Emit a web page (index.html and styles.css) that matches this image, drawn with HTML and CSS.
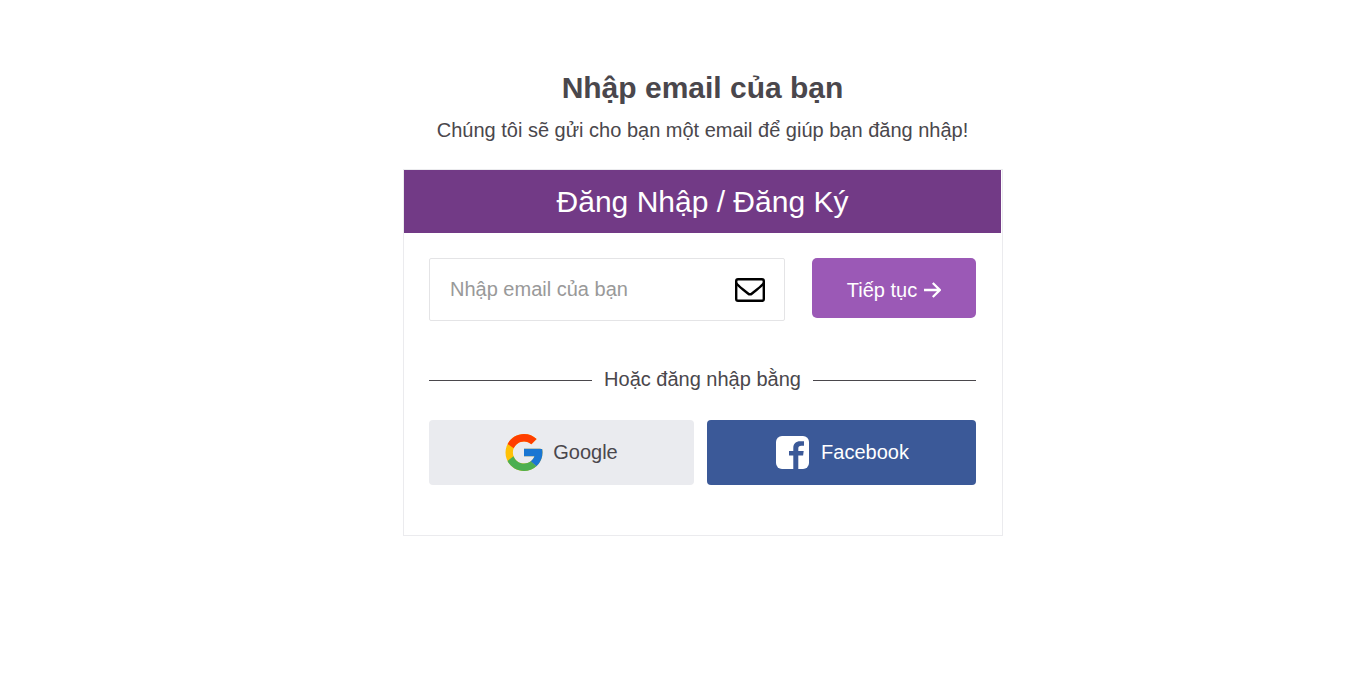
FILE: index.html
```html
<!DOCTYPE html>
<html lang="vi">
    <head>
        <meta charset="UTF-8">
        <title>Đăng Nhập / Đăng Ký</title>
        <link rel="stylesheet" href="styles.css">
    </head>

    <body>
        <main class="login">
            <h1>Nhập email của bạn</h1>
            <p class="intro">Chúng tôi sẽ gửi cho bạn một email để giúp bạn đăng nhập!</p>

            <div class="card">
                <h2 class="card-title">Đăng Nhập / Đăng Ký</h2>

                <form class="email-form">
                    <div class="email-field">
                        <input type="email" placeholder="Nhập email của bạn">
                        <svg class="mail-icon" viewBox="0 0 30 24">
                            <rect x="1.200" y="1.200" width="27.600" height="21.600" rx="1.800"/>
                            <path d="M1.200 5C2.500 7.500 7 10.500 13 15.500Q15 17.200 17 15.500C23 10.500 27.500 7.500 28.800 5"/>
                        </svg>
                    </div>
                    <button class="continue" type="submit">
                        Tiếp tục
                        <svg class="arrow-icon" viewBox="0 0 17 16">
                            <path d="M0 8H15.500M8.800 1L15.800 8L8.800 15"/>
                        </svg>
                    </button>
                </form>

                <div class="divider">Hoặc đăng nhập bằng</div>

                <div class="social">
                    <button class="google">
                        <svg class="google-icon" viewBox="4 4 40 40">
                            <path fill="#ffc107" d="M43.611 20.083H42V20H24v8h11.303c-1.649 4.657-6.080 8-11.303 8-6.627 0-12-5.373-12-12s5.373-12 12-12c3.059 0 5.842 1.154 7.961 3.039l5.657-5.657C34.046 6.053 29.268 4 24 4 12.955 4 4 12.955 4 24s8.955 20 20 20 20-8.955 20-20c0-1.341-.138-2.650-.389-3.917z"/>
                            <path fill="#ff3d00" d="M6.306 14.691l6.571 4.819C14.655 15.108 18.961 12 24 12c3.059 0 5.842 1.154 7.961 3.039l5.657-5.657C34.046 6.053 29.268 4 24 4 16.318 4 9.656 8.337 6.306 14.691z"/>
                            <path fill="#4caf50" d="M24 44c5.166 0 9.860-1.977 13.409-5.192l-6.190-5.238C29.211 35.091 26.715 36 24 36c-5.202 0-9.619-3.317-11.283-7.946l-6.522 5.025C9.505 39.556 16.227 44 24 44z"/>
                            <path fill="#1976d2" d="M43.611 20.083H42V20H24v8h11.303c-.792 2.237-2.231 4.166-4.087 5.571l6.193 5.238C36.971 39.205 44 34 44 24c0-1.341-.138-2.650-.389-3.917z"/>
                        </svg>
                        Google
                    </button>
                    <button class="facebook">
                        <svg class="facebook-icon" viewBox="0 0 33 33">
                            <rect width="33" height="33" rx="6" fill="#fff"/>
                            <path fill="#3b5998" d="M17.300 33V19.600H13V15H17.300V12C17.300 7.500 20 5.200 24.100 5.200H28V9.800H25.300C23.200 9.800 22.300 10.800 22.300 12.600V15H27.700L27.100 19.600H22.300V33Z"/>
                        </svg>
                        Facebook
                    </button>
                </div>
            </div>
        </main>
    </body>
</html>
```
FILE: styles.css
```css
*, *::after, *::before {
    box-sizing: border-box;
}

body {
    margin: 0;
    background-color: white;
    color: #4a474c;
    font-family: "Liberation Sans", Arial, sans-serif;
    font-size: 20px;
}

h1, h2, p {
    margin: 0;
    text-align: center;
}

button {
    display: flex;
    justify-content: center;
    align-items: center;
    padding: 0;
    border: none;
    font: inherit;
    cursor: pointer;
}

input {
    font: inherit;
}

.login {
    width: 600px;
    margin-left: 403px;
    padding-top: 68px;
}

h1 {
    padding-right: 1px;
    font-size: 30px;
    line-height: 40px;
}

.intro {
    margin-top: 7px;
    padding-right: 1px;
    line-height: 30px;
}

.card {
    height: 367px;
    margin-top: 24px;
    border: 1px solid #ebebee;
}

.card-title {
    height: 63px;
    margin-right: 1px;
    background-color: #723a86;
    color: white;
    font-size: 30px;
    font-weight: normal;
    line-height: 63px;
}

.email-form {
    display: flex;
    justify-content: space-between;
    align-items: flex-start;
    padding: 25px 26px 0 25px;
}

.email-field {
    display: flex;
    align-items: center;
    width: 356px;
    height: 63px;
    padding: 0 19px 0 20px;
    border: 1px solid #e4e4e6;
    border-radius: 2px;
}

.email-field input {
    flex: 1;
    min-width: 0;
    padding: 0;
    border: none;
    outline: none;
}

.email-field input::placeholder {
    color: #999;
}

.mail-icon {
    width: 30px;
    height: 24px;
    fill: none;
    stroke: black;
    stroke-width: 2.4;
}

.continue {
    gap: 7px;
    width: 164px;
    height: 60px;
    padding: 4px 0 0;
    border-radius: 5px;
    background-color: #9b59b6;
    color: white;
}

.arrow-icon {
    width: 17px;
    height: 16px;
    fill: none;
    stroke: white;
    stroke-width: 2.3;
}

.divider {
    display: flex;
    align-items: center;
    gap: 12px;
    margin: 43px 26px 0 25px;
    line-height: 30px;
}

/* lines on both sides of the text */
.divider::before,
.divider::after {
    content: '';
    flex: 1;
    height: 1px;
    margin-top: 2px;
    background-color: #4a474c;
}

.social {
    display: flex;
    gap: 13px;
    margin: 26px 26px 0 25px;
}

.google,
.facebook {
    height: 65px;
    border-radius: 4px;
}

.google {
    gap: 10px;
    width: 265px;
    background-color: #eaebef;
    color: #4a474c;
}

.facebook {
    gap: 12px;
    width: 269px;
    padding-left: 2px;
    background-color: #3b5998;
    color: white;
}

.google-icon {
    width: 38px;
    height: 37px;
}

.facebook-icon {
    width: 33px;
    height: 33px;
}
```
